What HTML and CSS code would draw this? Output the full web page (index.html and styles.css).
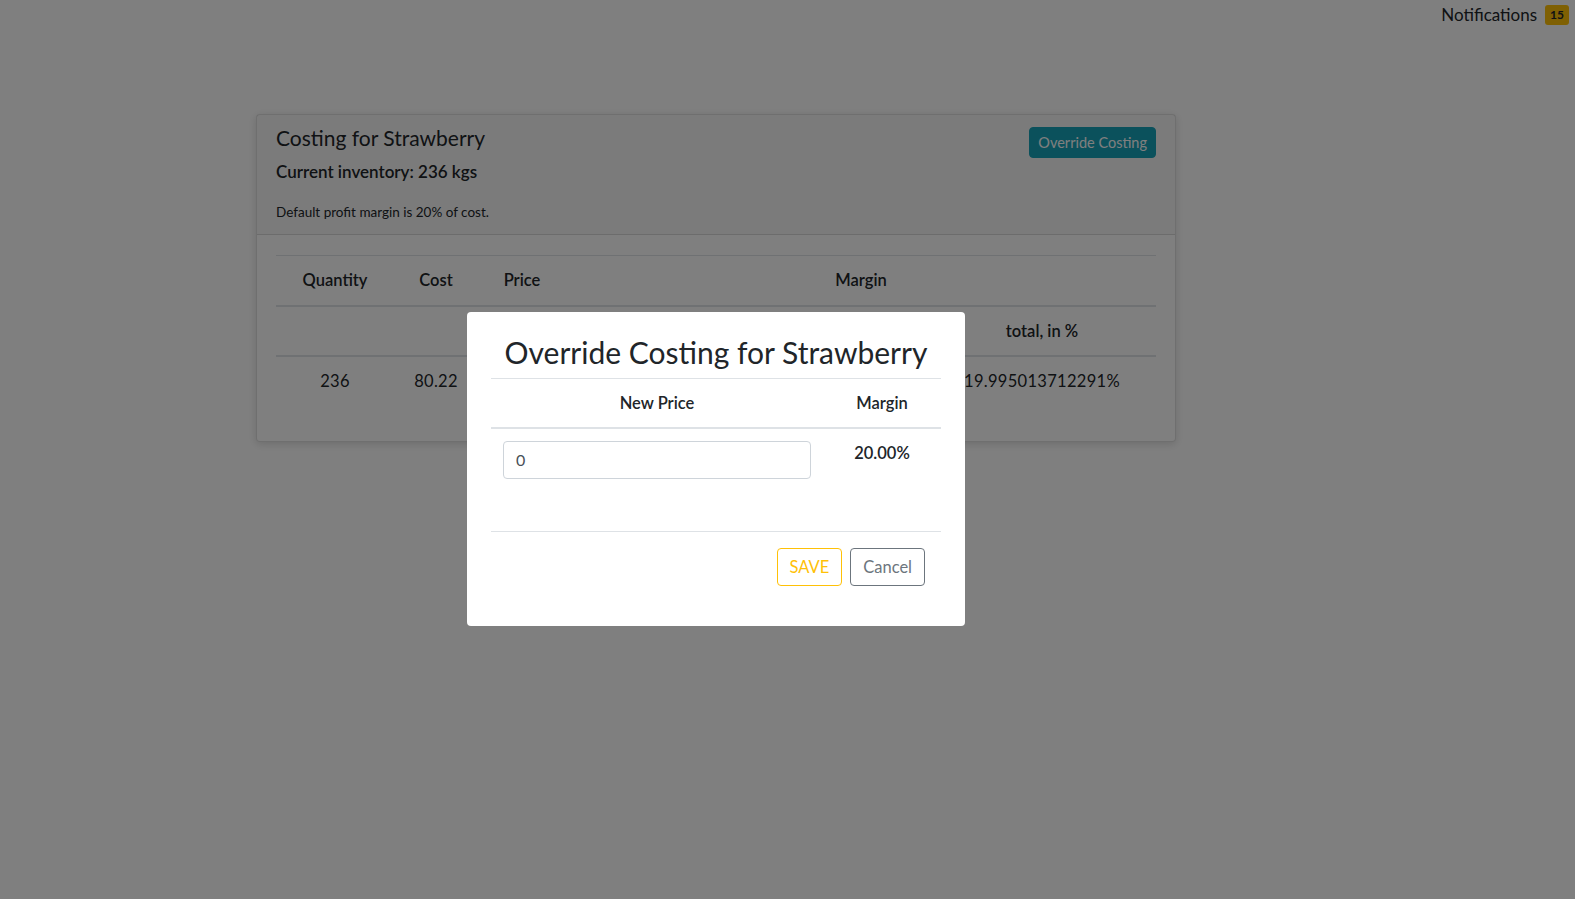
FILE: index.html
```html
<!DOCTYPE html>
<html>
<head>
<meta charset="utf-8">
<link rel="stylesheet" href="styles.css">
</head>
<body>
<div class="topbar">
  <span class="notif">Notifications</span>
  <span class="badge">15</span>
</div>
<main class="page">
  <section class="card">
    <header class="card-header">
      <div class="card-heading">
        <h3 class="card-title">Costing for Strawberry</h3>
        <p class="inventory">Current inventory: 236 kgs</p>
        <p class="note">Default profit margin is 20% of cost.</p>
      </div>
      <button class="btn btn-info">Override Costing</button>
    </header>
    <div class="card-body">
      <table class="costing">
        <thead>
          <tr class="row-first">
            <th class="c-qty">Quantity</th>
            <th class="c-cost">Cost</th>
            <th class="c-price">Price</th>
            <th colspan="2">Margin</th>
          </tr>
          <tr>
            <th></th>
            <th></th>
            <th></th>
            <th class="c-unit"></th>
            <th class="c-total">total, in %</th>
          </tr>
        </thead>
        <tbody>
          <tr>
            <td>236</td>
            <td>80.22</td>
            <td></td>
            <td></td>
            <td>19.995013712291%</td>
          </tr>
        </tbody>
      </table>
    </div>
  </section>
</main>
<div class="overlay"></div>
<div class="modal">
  <h2 class="modal-title">Override Costing for Strawberry</h2>
  <hr class="rule">
  <table class="override">
    <thead>
      <tr>
        <th class="o-price">New Price</th>
        <th class="o-margin">Margin</th>
      </tr>
    </thead>
    <tbody>
      <tr>
        <td><input class="field" type="text" value="0"></td>
        <td class="o-value">20.00%</td>
      </tr>
    </tbody>
  </table>
  <hr class="rule rule-bottom">
  <div class="actions">
    <button class="btn btn-save">SAVE</button>
    <button class="btn btn-cancel">Cancel</button>
  </div>
</div>
</body>
</html>
```
FILE: styles.css
```css
* { box-sizing: border-box; }
html, body { margin: 0; padding: 0; }
body {
  width: 1575px;
  height: 899px;
  background: #fff;
  color: #212529;
  font-family: "Lato", "Open Sans", sans-serif;
  font-size: 16px;
  line-height: 1.5;
  position: relative;
  overflow: hidden;
}
.topbar {
  display: flex;
  justify-content: flex-end;
  align-items: center;
  gap: 8px;
  padding: 2px 6px 0 0;
  height: 28px;
}
.notif { font-size: 17px; color: #212529; }
.badge {
  background: #ffc107;
  color: #212529;
  font-size: 12px;
  font-weight: 700;
  line-height: 1;
  padding: 4px 5px;
  border-radius: 3px;
}
.page { padding: 86px 0 0 256px; }
.card {
  width: 920px;
  background: #fff;
  border: 1px solid rgba(0,0,0,.125);
  border-radius: 4px;
  box-shadow: 0 2px 8px rgba(0,0,0,.15);
}
.card-header {
  display: flex;
  justify-content: space-between;
  align-items: flex-start;
  padding: 10px 19px 12px 19px;
  background: rgba(0,0,0,.03);
  border-bottom: 1px solid rgba(0,0,0,.125);
}
.card-title {
  margin: 0;
  font-size: 21px;
  font-weight: 400;
  line-height: 1.2;
}
.inventory {
  margin: 9px 0 0;
  font-size: 17px;
  font-weight: 600;
}
.note {
  margin: 17px 0 0;
  font-size: 13.5px;
}
.btn {
  font-family: inherit;
  border-radius: 4px;
  cursor: pointer;
}
.btn-info {
  margin-top: 2px;
  background: #17a2b8;
  border: 1px solid #17a2b8;
  color: #fff;
  font-size: 14.5px;
  height: 31px;
  padding: 0 8px;
}
.card-body { padding: 20px 19px 19px; }
.costing {
  width: 880px;
  border-collapse: collapse;
  text-align: center;
  margin-bottom: 16px;
}
.costing th, .costing td {
  padding: 12px;
  height: 49px;
  border-top: 1px solid #dee2e6;
  font-size: 16.5px;
}
.costing .row-first th { height: 47px; }
.costing th { font-weight: 600; border-bottom: 2px solid #dee2e6; }
.costing td { letter-spacing: 0.3px; }
.c-qty { width: 118px; }
.c-cost { width: 84px; }
.c-price { width: 88px; }
.c-unit { width: 362px; }
.c-total { width: 228px; }
.overlay {
  position: absolute;
  inset: 0;
  background: rgba(0,0,0,.5);
}
.modal {
  position: absolute;
  left: 467px;
  top: 312px;
  width: 498px;
  height: 314px;
  background: #fff;
  border-radius: 4px;
  padding: 22px 24px 0;
}
.modal-title {
  margin: 0;
  text-align: center;
  font-size: 30px;
  font-weight: 400;
  line-height: 1.2;
  height: 44px;
}
.rule {
  margin: 0;
  border: 0;
  border-top: 1px solid #dee2e6;
}
.override {
  width: 450px;
  border-collapse: collapse;
  text-align: center;
}
.override th {
  font-weight: 600;
  font-size: 16.5px;
  padding: 12px 12px 11px;
  border-bottom: 2px solid #dee2e6;
}
.o-price { width: 332px; }
.override td {
  padding: 12px;
  vertical-align: top;
  height: 103px;
}
.o-value { font-weight: 600; font-size: 16.5px; line-height: 1; padding-top: 16px !important; }
.field {
  display: block;
  width: 308px;
  height: 38px;
  border: 1px solid #ced4da;
  border-radius: 4px;
  padding: 6px 12px;
  font-family: inherit;
  font-size: 16px;
  color: #495057;
}
.actions {
  display: flex;
  justify-content: flex-end;
  gap: 8px;
  padding: 16px 16px 0 0;
}
.btn-save, .btn-cancel {
  background: #fff;
  font-size: 16.5px;
  height: 38px;
  padding: 0 12px;
}
.btn-save { border: 1px solid #ffc107; color: #ffc107; }
.btn-cancel { border: 1px solid #6c757d; color: #6c757d; }
```
